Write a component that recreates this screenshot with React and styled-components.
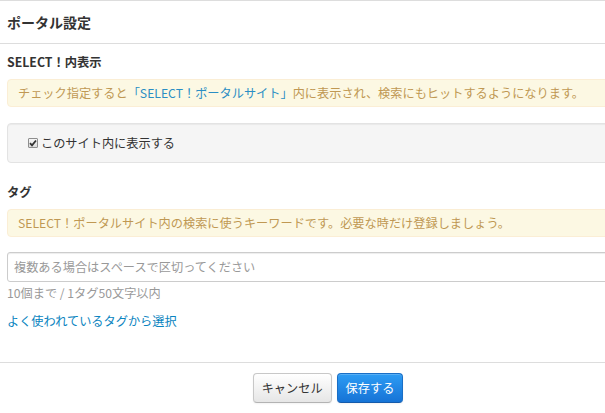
import React from "react";
import styled, { createGlobalStyle } from "styled-components";

const GlobalStyle = createGlobalStyle`
  html, body {
    margin: 0;
    padding: 0;
    background: #fff;
    overflow: hidden;
  }
  body {
    font-family: "Noto Sans CJK JP", "Noto Sans", "Liberation Sans", sans-serif;
    font-size: 12.2px;
    color: #333;
  }
  * { box-sizing: border-box; }
`;

const Modal = styled.div`
  width: 656px;
  border-top: 1px solid #dddddd;
  background: #fff;
`;

const Header = styled.div`
  height: 43px;
  padding: 0 7px;
  border-bottom: 1px solid #dddddd;
  display: flex;
  align-items: center;
`;

const Title = styled.h3`
  margin: 0;
  font-size: 14px;
  font-weight: bold;
  line-height: 20px;
  color: #333;
`;

const Body = styled.div`
  padding: 9px 7px 13px;
`;

const Group = styled.div`
  margin-bottom: 20px;
`;

const Label = styled.div`
  font-size: 12.3px;
  font-weight: bold;
  line-height: 18px;
  color: #333;
  margin-bottom: 8px;
`;

const Alert = styled.div`
  background: #fcf8e3;
  border: 1px solid #fbeed5;
  border-radius: 4px;
  padding: 4px 10px;
  line-height: 18px;
  color: #c09853;
  margin-bottom: ${(p) => p.$mb || 0}px;
  white-space: nowrap;
`;

const Accent = styled.span`
  color: #2a8ec4;
`;

const Well = styled.div`
  background: #f5f5f5;
  border: 1px solid #e3e3e3;
  border-radius: 4px;
  box-shadow: inset 0 1px 1px rgba(0, 0, 0, 0.05);
  padding: 11px 20px;
`;

const CheckLabel = styled.label`
  display: flex;
  align-items: center;
  gap: 3px;
  line-height: 16px;
  color: #333;
`;

const CheckBox = styled.span`
  width: 10px;
  height: 10px;
  border: 1px solid #8e8e8e;
  border-radius: 1px;
  background: linear-gradient(#f6f6f6, #dcdcdc);
  display: inline-flex;
  align-items: center;
  justify-content: center;
`;

const Input = styled.input`
  display: block;
  width: 100%;
  height: 30px;
  padding: 4px 6px;
  border: 1px solid #cccccc;
  border-radius: 3px;
  box-shadow: inset 0 1px 1px rgba(0, 0, 0, 0.075);
  font-family: inherit;
  font-size: 12.2px;
  color: #555;
  outline: none;
  &::placeholder {
    color: #999;
  }
`;

const Help = styled.div`
  margin-top: 3px;
  line-height: 16px;
  color: #999;
`;

const Link = styled.a`
  display: block;
  margin-top: 12px;
  line-height: 16px;
  color: #0a84c0;
  text-decoration: none;
`;

const Footer = styled.div`
  border-top: 1px solid #dddddd;
  padding: 10px 0;
  display: flex;
  justify-content: center;
  gap: 5px;
`;

const Button = styled.button`
  height: 30px;
  padding: 0 8px;
  font-family: inherit;
  font-size: 12.2px;
  border-radius: 4px;
  cursor: pointer;
  color: ${(p) => (p.$primary ? "#fff" : "#333")};
  border: 1px solid ${(p) => (p.$primary ? "#1a6fc6" : "#c8c8c8")};
  border-bottom-color: ${(p) => (p.$primary ? "#155bab" : "#b3b3b3")};
  background: ${(p) =>
    p.$primary
      ? "linear-gradient(#2d9cf4, #1673d6)"
      : "linear-gradient(#ffffff, #e6e6e6)"};
  box-shadow: inset 0 1px 0 rgba(255, 255, 255, 0.2),
    0 1px 2px rgba(0, 0, 0, 0.05);
`;

export default function App() {
  return (
    <>
      <GlobalStyle />
      <Modal>
        <Header>
          <Title>ポータル設定</Title>
        </Header>
        <Body>
          <Group>
            <Label>SELECT！内表示</Label>
            <Alert $mb={16}>
              チェック指定すると<Accent>「SELECT！ポータルサイト」</Accent>内に表示され、検索にもヒットするようになります。
            </Alert>
            <Well>
              <CheckLabel>
                <CheckBox>
                  <svg width="8" height="8" viewBox="0 0 8 8">
                    <path
                      d="M1 4.2 L3 6.3 L7 1.5"
                      fill="none"
                      stroke="#333"
                      strokeWidth="1.8"
                    />
                  </svg>
                </CheckBox>
                このサイト内に表示する
              </CheckLabel>
            </Well>
          </Group>
          <Group>
            <Label>タグ</Label>
            <Alert $mb={15}>
              SELECT！ポータルサイト内の検索に使うキーワードです。必要な時だけ登録しましょう。
            </Alert>
            <Input placeholder="複数ある場合はスペースで区切ってください" />
            <Help>10個まで / 1タグ50文字以内</Help>
            <Link href="#">よく使われているタグから選択</Link>
          </Group>
        </Body>
        <Footer>
          <Button>キャンセル</Button>
          <Button $primary>保存する</Button>
        </Footer>
      </Modal>
    </>
  );
}
